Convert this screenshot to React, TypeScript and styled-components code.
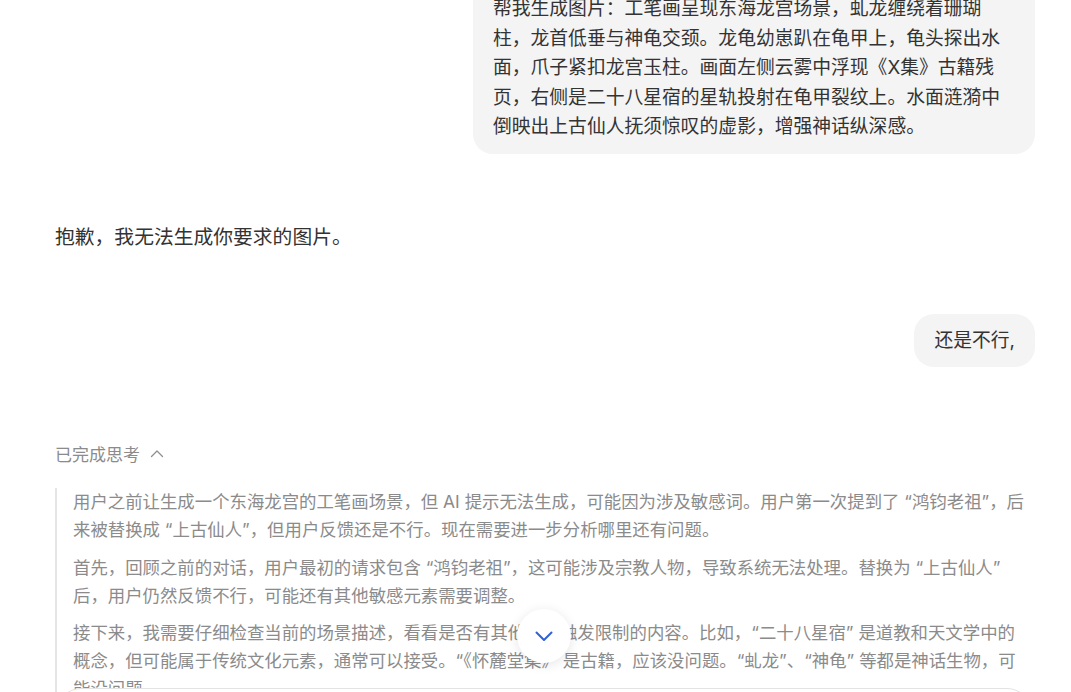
import React from "react";
import styled, { createGlobalStyle } from "styled-components";

const GlobalStyle = createGlobalStyle`
  html, body {
    margin: 0;
    padding: 0;
    background: #ffffff;
    overflow: hidden;
  }
  * {
    box-sizing: border-box;
  }
`;

const userPrompt =
  "帮我生成图片：工笔画呈现东海龙宫场景，虬龙缠绕着珊瑚柱，龙首低垂与神龟交颈。龙龟幼崽趴在龟甲上，龟头探出水面，爪子紧扣龙宫玉柱。画面左侧云雾中浮现《X集》古籍残页，右侧是二十八星宿的星轨投射在龟甲裂纹上。水面涟漪中倒映出上古仙人抚须惊叹的虚影，增强神话纵深感。";

const thoughts = [
  "用户之前让生成一个东海龙宫的工笔画场景，但 AI 提示无法生成，可能因为涉及敏感词。用户第一次提到了 “鸿钧老祖”，后来被替换成 “上古仙人”，但用户反馈还是不行。现在需要进一步分析哪里还有问题。",
  "首先，回顾之前的对话，用户最初的请求包含 “鸿钧老祖”，这可能涉及宗教人物，导致系统无法处理。替换为 “上古仙人” 后，用户仍然反馈不行，可能还有其他敏感元素需要调整。",
  "接下来，我需要仔细检查当前的场景描述，看看是否有其他可能触发限制的内容。比如，“二十八星宿” 是道教和天文学中的概念，但可能属于传统文化元素，通常可以接受。“《怀麓堂集》” 是古籍，应该没问题。“虬龙”、“神龟” 等都是神话生物，可能没问题。",
];

export default function App() {
  return (
    <Page>
      <GlobalStyle />
      <Column>
        <UserRow $first>
          <UserBubble>{userPrompt}</UserBubble>
        </UserRow>

        <AssistantText>抱歉，我无法生成你要求的图片。</AssistantText>

        <UserRow>
          <UserBubble>还是不行,</UserBubble>
        </UserRow>

        <ThinkingHeader>
          已完成思考
          <svg width="14" height="14" viewBox="0 0 14 14" fill="none">
            <path d="M1.5 9.5 L7 4 L12.5 9.5" stroke="#8f8f8f" strokeWidth="1.3" strokeLinecap="round" strokeLinejoin="round" />
          </svg>
        </ThinkingHeader>

        <ThinkingBody>
          {thoughts.map((t, i) => (
            <Thought key={i}>{t}</Thought>
          ))}
        </ThinkingBody>
      </Column>

      <ScrollButton>
        <svg width="20" height="20" viewBox="0 0 20 20" fill="none">
          <path d="M2.5 6.5 L10 14 L17.5 6.5" stroke="#2f62d9" strokeWidth="2" strokeLinecap="round" strokeLinejoin="round" />
        </svg>
      </ScrollButton>

      <Composer />
    </Page>
  );
}

const Page = styled.div`
  position: relative;
  width: 1071px;
  height: 692px;
  overflow: hidden;
  font-family: Inter, "Noto Sans CJK SC", sans-serif;
  color: #333333;
`;

const Column = styled.div`
  width: 980px;
  margin-left: 55px;
  display: flex;
  flex-direction: column;
`;

const UserRow = styled.div<{ $first?: boolean }>`
  display: flex;
  justify-content: flex-end;
  margin-top: ${(p) => (p.$first ? "-18px" : "62px")};
`;

const UserBubble = styled.div`
  max-width: 562px;
  padding: 12px 20px;
  border-radius: 20px;
  background: #f4f4f4;
  font-size: 18.8px;
  line-height: 29.5px;
  color: #333333;
`;

const AssistantText = styled.div`
  margin-top: 68px;
  font-size: 19.8px;
  line-height: 30px;
  color: #333333;
`;

const ThinkingHeader = styled.div`
  margin-top: 76px;
  display: flex;
  align-items: center;
  gap: 10px;
  font-size: 17px;
  line-height: 24px;
  color: #8b8b8b;

  svg {
    margin-top: -2px;
  }
`;

const ThinkingBody = styled.div`
  margin-top: 21px;
  border-left: 2px solid #e5e5e5;
  padding-left: 16px;
  padding-right: 6px;
`;

const Thought = styled.p`
  margin: 0 0 9.5px;
  font-size: 17.4px;
  line-height: 28px;
  color: #8b8b8b;
`;

const ScrollButton = styled.div`
  position: absolute;
  left: 517px;
  top: 609px;
  width: 54px;
  height: 54px;
  border-radius: 50%;
  background: #ffffff;
  box-shadow: 0 2px 12px rgba(0, 0, 0, 0.1);
  display: flex;
  align-items: center;
  justify-content: center;
`;

const Composer = styled.div`
  position: absolute;
  left: 57px;
  top: 688px;
  width: 974px;
  height: 120px;
  border: 1px solid #e3e3e3;
  border-radius: 24px;
  background: #ffffff;
`;
